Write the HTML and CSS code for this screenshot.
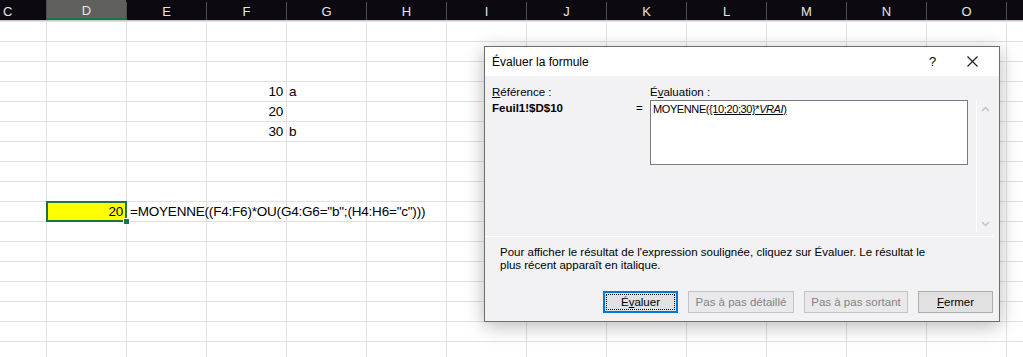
FILE: index.html
```html
<!DOCTYPE html>
<html lang="fr">
<head>
  <meta charset="UTF-8" />
  <title>Évaluer la formule</title>
  <link rel="stylesheet" href="styles.css">
</head>
<body>
  <div class="sheet">
    <div class="colhead">
      <div class="ch first">C</div>
      <div class="ch active">D</div>
      <div class="ch">E</div>
      <div class="ch">F</div>
      <div class="ch">G</div>
      <div class="ch">H</div>
      <div class="ch">I</div>
      <div class="ch">J</div>
      <div class="ch">K</div>
      <div class="ch">L</div>
      <div class="ch">M</div>
      <div class="ch">N</div>
      <div class="ch">O</div>
      <div class="ch"></div>
    </div>

    <div class="cells">
      <div class="cell num col-f row-4">10</div>
      <div class="cell txt col-g row-4">a</div>
      <div class="cell num col-f row-5">20</div>
      <div class="cell num col-f row-6">30</div>
      <div class="cell txt col-g row-6">b</div>
      <div class="cell num col-d row-10 selected">20<span class="handle"></span></div>
      <div class="cell txt col-e row-10 overflow">=MOYENNE((F4:F6)*OU(G4:G6="b";(H4:H6="c")))</div>
    </div>
  </div>

  <div class="dialog">
    <div class="dlg-title">
      <span class="dlg-name">Évaluer la formule</span>
      <span class="dlg-help">?</span>
      <span class="dlg-close">
        <svg width="11" height="11" viewBox="0 0 11 11"><path d="M0.5 0.5 L10.5 10.5 M10.5 0.5 L0.5 10.5" stroke="#1a1a1a" stroke-width="1.1" fill="none"/></svg>
      </span>
    </div>

    <div class="dlg-body">
      <div class="eval-row">
        <div class="ref-col">
          <div class="lbl"><u>R</u>éférence :</div>
          <div class="ref-val">Feuil1!$D$10</div>
        </div>
        <div class="eq">=</div>
        <div class="eval-col">
          <div class="lbl">É<u>v</u>aluation :</div>
          <div class="eval-box">MOYENNE(<u>{10;20;30}*<i>VRAI</i>)</u></div>
        </div>
        <div class="vscroll">
          <svg class="chev" width="9" height="6" viewBox="0 0 9 6"><path d="M1 5 L4.5 1.5 L8 5" stroke="#c2c2c2" stroke-width="1.4" fill="none"/></svg>
          <svg class="chev" width="9" height="6" viewBox="0 0 9 6"><path d="M1 1 L4.5 4.5 L8 1" stroke="#c2c2c2" stroke-width="1.4" fill="none"/></svg>
        </div>
      </div>

      <div class="hint">
        Pour afficher le résultat de l'expression soulignée, cliquez sur Évaluer. Le résultat le<br>
        plus récent apparaît en italique.
      </div>

      <div class="buttons">
        <button class="btn default"><span class="focus">É<u>v</u>aluer</span></button>
        <button class="btn step-in" disabled>Pas à pas détaillé</button>
        <button class="btn step-out" disabled>Pas à pas sortant</button>
        <button class="btn"><u>F</u>ermer</button>
      </div>
    </div>
  </div>
</body>
</html>
```

FILE: styles.css
```css
body {
  margin: 0;
  width: 1023px;
  height: 357px;
  overflow: hidden;
  background: #fff;
  font-family: "Liberation Sans", Arial, sans-serif;
}

/* spreadsheet */
.colhead {
  display: grid;
  grid-template-columns: 46px repeat(12, 80px) 1fr;
  height: 21px;
  background: #0c0a10;
  border-bottom: 1px solid #c8c8c8;
  box-sizing: border-box;
}
.ch {
  color: #e4e4e4;
  font-size: 13px;
  display: flex;
  align-items: center;
  justify-content: center;
  border-left: 1px solid #4e4e50;
  margin-top: 2px;
}
.ch.first {
  border-left: none;
  justify-content: flex-start;
  padding-left: 3px;
}
.ch.active {
  background: #5f5f5c;
  border-bottom: 2px solid #1e7145;
  margin-top: 0;
  padding-top: 2px;
}

.cells {
  display: grid;
  grid-template-columns: 46px repeat(12, 80px) 1fr;
  grid-template-rows: repeat(17, 20px);
  height: 336px;
  background-image:
    linear-gradient(to right, #e1e1e1 1px, transparent 1px),
    linear-gradient(to bottom, #e1e1e1 1px, transparent 1px);
  background-size: 80px 20px, 80px 20px;
  background-position: 46px 0, 0 0;
}
.cell {
  display: flex;
  align-items: flex-end;
  font-size: 13.5px;
  line-height: 16px;
  letter-spacing: -0.2px;
  color: #000;
  padding: 0 3px 1px 3px;
  white-space: nowrap;
}
.num { justify-content: flex-end; }
.txt { justify-content: flex-start; }
.col-d { grid-column: 2; }
.col-e { grid-column: 3; }
.col-f { grid-column: 4; }
.col-g { grid-column: 5; }
.row-4 { grid-row: 4; }
.row-5 { grid-row: 5; }
.row-6 { grid-row: 6; }
.row-10 { grid-row: 10; }
.overflow {
  grid-column: 3 / span 6;
  padding-left: 4px;
}

.selected {
  position: relative;
  background: #ffff00;
  border: 2px solid #217346;
  margin: 0 -1px -1px 0;
  padding: 0 2px 0 0;
}
.handle {
  position: absolute;
  right: -5px;
  bottom: -5px;
  width: 5px;
  height: 5px;
  background: #217346;
  border: 1px solid #fff;
}

/* dialog */
.dialog {
  position: absolute;
  left: 484px;
  top: 46px;
  width: 516px;
  height: 276px;
  box-sizing: border-box;
  border: 1px solid #6e6e6e;
  background: #f2f1f4;
  box-shadow: 0 4px 18px rgba(0, 0, 0, 0.28);
  font-family: "Liberation Sans", Arial, sans-serif;
  font-size: 11.5px;
  color: #000;
  display: flex;
  flex-direction: column;
}
.dlg-title {
  height: 29px;
  background: #fff;
  display: flex;
  align-items: center;
  padding-left: 7px;
  font-size: 12px;
}
.dlg-name { flex: 1; }
.dlg-help {
  width: 14px;
  margin-right: 24px;
  font-size: 13px;
}
.dlg-close {
  width: 11px;
  height: 11px;
  margin-right: 21px;
  display: flex;
}

.dlg-body {
  flex: 1;
  display: flex;
  flex-direction: column;
}
.eval-row {
  display: flex;
  padding: 8px 0 0 7px;
  height: 161px;
  box-sizing: border-box;
  border-bottom: 1px solid #ffffff;
  margin-right: 5px;
}
.lbl {
  height: 16px;
  line-height: 16px;
}
.ref-col { width: 144px; }
.ref-val {
  font-weight: bold;
  line-height: 16px;
}
.eq {
  width: 14px;
  margin-top: 16px;
  line-height: 16px;
}
.eval-box {
  width: 318px;
  height: 65px;
  box-sizing: border-box;
  background: #fff;
  border: 1px solid #7a7a7a;
  padding: 1px 2px;
  font-size: 11px;
  letter-spacing: -0.4px;
  line-height: 15px;
  white-space: nowrap;
}
.vscroll {
  margin: 16px 0 0 8px;
  width: 17px;
  height: 132px;
  border-left: 1px solid #ffffff;
  display: flex;
  flex-direction: column;
  justify-content: space-between;
  align-items: center;
  padding: 6px 0 5px;
  box-sizing: border-box;
}

.hint {
  padding: 9px 0 0 15px;
  line-height: 13px;
  height: 54px;
  box-sizing: border-box;
}

.buttons {
  display: flex;
  justify-content: flex-end;
  gap: 10px;
  padding-right: 6px;
}
.btn {
  width: 75px;
  height: 22px;
  box-sizing: border-box;
  font-family: inherit;
  font-size: 11.5px;
  color: #000;
  background: #e1e1e1;
  border: 1px solid #adadad;
  padding: 0;
  margin: 0;
}
.btn.step-in { width: 106px; }
.btn.step-out { width: 104px; }
.btn:disabled {
  color: #838383;
  background: #e9e8eb;
  border-color: #c3c3c3;
}
.btn.default {
  border: 2px solid #0078d7;
  padding: 1px;
}
.focus {
  display: flex;
  align-items: center;
  justify-content: center;
  height: 100%;
  border: 1px dotted #000;
  box-sizing: border-box;
}
```
